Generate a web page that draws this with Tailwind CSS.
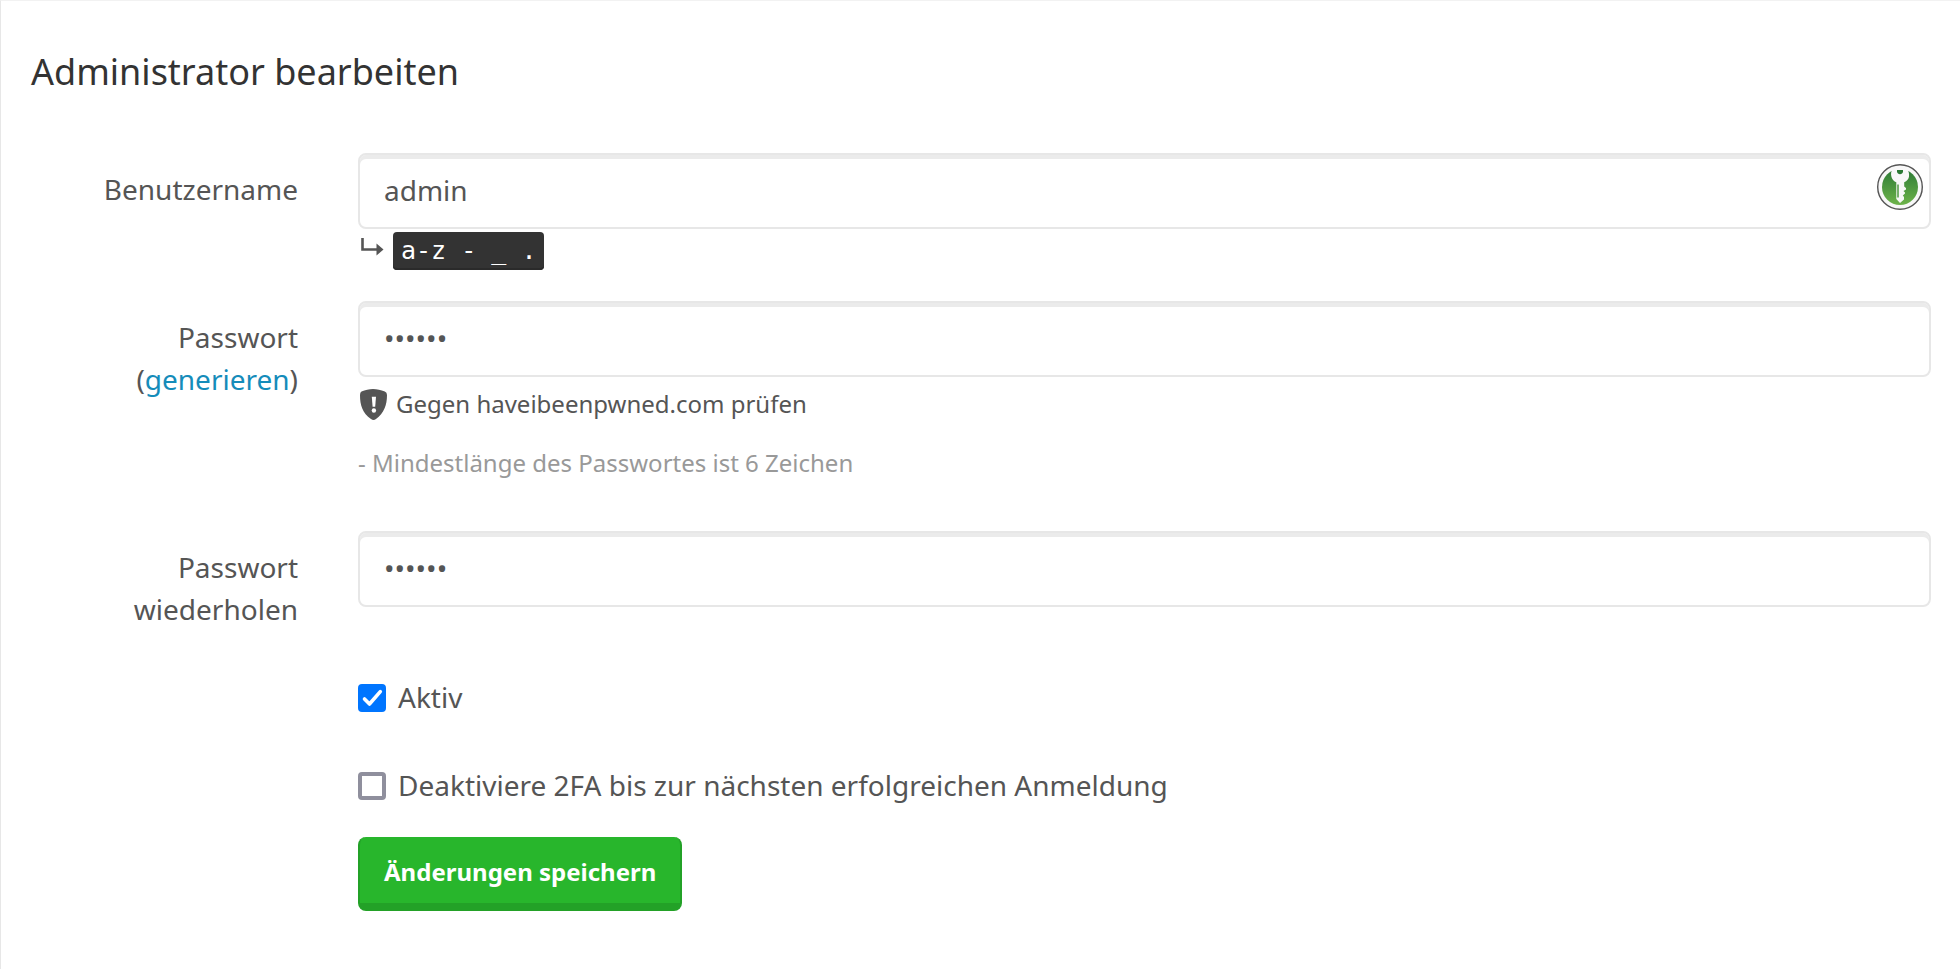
<!DOCTYPE html>
<html lang="de">
<head>
<meta charset="utf-8">
<meta name="viewport" content="width=device-width, initial-scale=1">
<title>Administrator bearbeiten</title>
<script src="https://cdn.jsdelivr.net/npm/@tailwindcss/browser@4"></script>
</head>
<body class="min-h-screen bg-white font-['Noto_Sans',sans-serif] text-[28px] leading-[42px] text-[#555555]">
<main class="min-h-screen border-t border-l border-t-[#f2f2f2] border-l-[#e7e7e7] pt-[51px] pr-[29px] pb-12 pl-[30px]">
  <h1 class="text-[36px] leading-[40px] text-[#333333]">Administrator bearbeiten</h1>

  <form class="mt-[61px]">
    <div class="grid grid-cols-[267px_minmax(0,1fr)] gap-x-[60px]">
      <label for="username" class="pt-[15px] text-right">Benutzername</label>
      <div>
        <div class="relative">
          <input id="username" type="text" value="admin" class="block h-[76px] w-full rounded-lg border-2 border-[#e7e7e7] bg-white px-6 pb-[2px] shadow-[inset_0_4px_0_#ebebeb] outline-none">
          <button type="button" aria-label="Passwort-Manager" class="absolute top-[10px] right-[7px] size-[48px]">
            <svg viewBox="0 0 48 48" class="size-full" aria-hidden="true">
              <defs><linearGradient id="g" x1="0" y1="0" x2="0" y2="1"><stop offset="0" stop-color="#2c7a35"/><stop offset="1" stop-color="#6db34a"/></linearGradient></defs>
              <circle cx="24" cy="24" r="22.3" fill="#f8f8f8" stroke="#555" stroke-width="1.4"/>
              <circle cx="24" cy="24" r="18" fill="url(#g)"/>
              <path d="M17 5.500 C15 8 14.600 11 15.500 14 C16.200 16.500 18 18.500 20.300 19.300 V36 L24 40 L28 36.500 V34 L26.800 32.500 L29 30.500 V29.500 L27.500 28 L30 26.500 V25 L28.200 23.500 V19.300 C31 18 32.800 16 33 13.500 C33.400 10.500 32.500 7.500 31 5.500 Z" fill="#f8f8f8"/>
              <path d="M21 7 H27 V8.500 C26.800 10.500 25.500 11.200 24 11.200 S21.200 10.500 21 8.500 Z" fill="#2c7a35"/>
              <path d="M22 21.500 V34.500" stroke="#4e9a40" stroke-width="1.500" fill="none"/>
            </svg>
          </button>
        </div>
        <p class="mt-[3px] flex h-[38px] items-start gap-[9px]">
          <svg viewBox="0 0 26 38" class="h-[38px] w-[26px]" aria-hidden="true"><path d="M4.500 6 V17.500 H20" fill="none" stroke="#555" stroke-width="2.600"/><path d="M18.500 11.500 L25.500 17.500 L18.500 23.500 Z" fill="#555"/></svg>
          <code class="rounded-[4px] bg-[#333333] px-2 font-['DejaVu_Sans_Mono',monospace] text-[25px] leading-[38px] text-white shadow-[inset_0_-2px_0_#2a2a2a]">a-z - _ .</code>
        </p>
      </div>
    </div>

    <div class="mt-[31px] grid grid-cols-[267px_minmax(0,1fr)] gap-x-[60px]">
      <div class="pt-[15px] text-right"><label for="password">Passwort</label><br>(<a href="#" class="text-[#158cba]">generieren</a>)</div>
      <div>
        <input id="password" type="password" value="123456" class="block h-[76px] w-full rounded-lg border-2 border-[#e7e7e7] bg-white px-6 pb-[2px] shadow-[inset_0_4px_0_#ebebeb] outline-none">
        <button type="button" class="mt-[9px] flex items-center gap-[8px] text-[24px] leading-[36px]">
          <svg viewBox="0 0 30 34" class="h-[34px] w-[30px]" aria-hidden="true"><path d="M3.500 4.600 C11 1.200 19 1.200 26.800 4.600 Q29 5.600 29 8 C29 18 26 26 18 32 Q15.500 34 13 32 C4.500 26 2 18 2 8 Q2 5.300 3.500 4.600 Z" fill="#555"/><path d="M13.800 9.800 H18 L17.200 19.800 H14.600 Z" fill="#fff"/><circle cx="15.900" cy="23.500" r="2.200" fill="#fff"/></svg>
          <span>Gegen haveibeenpwned.com prüfen</span>
        </button>
        <p class="mt-[23px] text-[24px] leading-[36px] text-[#999999]">- Mindestlänge des Passwortes ist 6 Zeichen</p>
      </div>
    </div>

    <div class="mt-[50px] grid grid-cols-[267px_minmax(0,1fr)] gap-x-[60px]">
      <label for="repeat" class="pt-[15px] text-right">Passwort wiederholen</label>
      <input id="repeat" type="password" value="123456" class="block h-[76px] w-full rounded-lg border-2 border-[#e7e7e7] bg-white px-6 pb-[2px] shadow-[inset_0_4px_0_#ebebeb] outline-none">
    </div>

    <div class="mt-[46px] pl-[327px]">
      <div class="grid h-[44px] grid-cols-[28px_1fr] items-center gap-x-3">
        <input id="active" type="checkbox" checked class="peer col-start-1 row-start-1 size-[28px] appearance-none rounded-[4px] border-[4px] border-[#8f8f9d] bg-white checked:border-[#0075ff] checked:bg-[#0075ff]">
        <svg viewBox="0 0 28 28" class="pointer-events-none invisible col-start-1 row-start-1 size-[28px] peer-checked:visible" aria-hidden="true"><path d="M6.500 15 L11.500 20 L22.300 7.600" fill="none" stroke="#fff" stroke-width="3.600" stroke-linecap="round" stroke-linejoin="round"/></svg>
        <label for="active" class="col-start-2 row-start-1 pb-[2px]">Aktiv</label>
      </div>
      <div class="mt-[44px] grid h-[44px] grid-cols-[28px_1fr] items-center gap-x-3">
        <input id="disable-2fa" type="checkbox" class="peer col-start-1 row-start-1 size-[28px] appearance-none rounded-[4px] border-[4px] border-[#8f8f9d] bg-white checked:border-[#0075ff] checked:bg-[#0075ff]">
        <svg viewBox="0 0 28 28" class="pointer-events-none invisible col-start-1 row-start-1 size-[28px] peer-checked:visible" aria-hidden="true"><path d="M6.500 15 L11.500 20 L22.300 7.600" fill="none" stroke="#fff" stroke-width="3.600" stroke-linecap="round" stroke-linejoin="round"/></svg>
        <label for="disable-2fa" class="col-start-2 row-start-1 pb-[2px]">Deaktiviere 2FA bis zur nächsten erfolgreichen Anmeldung</label>
      </div>
      <button type="submit" class="mt-[29px] block h-[74px] rounded-lg border-x-2 border-b-[8px] border-[#23a127] bg-[#28b62c] px-6 pt-[4px] text-[24px] leading-[36px] font-bold text-white">Änderungen speichern</button>
    </div>
  </form>
</main>
</body>
</html>
